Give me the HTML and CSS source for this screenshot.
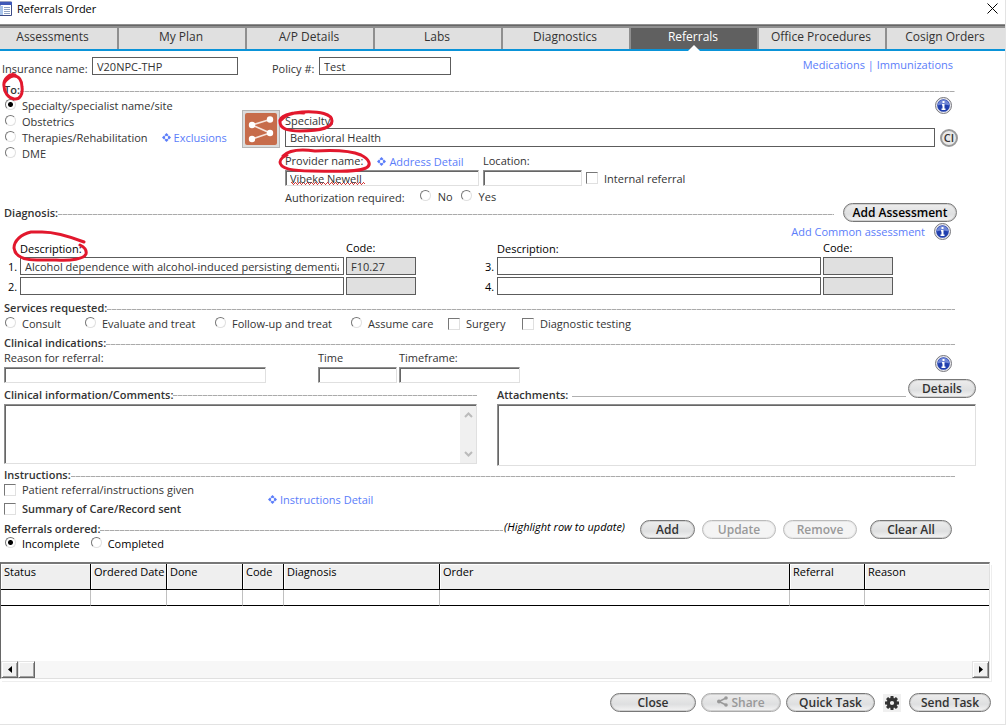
FILE: index.html
```
<!DOCTYPE html>
<html lang="en">
<head>
    <meta charset="UTF-8">
    <meta name="viewport" content="width=device-width, initial-scale=1.0">
    <title>Referrals Order</title>
    <link rel="stylesheet" href="styles.css">
</head>
<body>
    <!-- shared icons -->
    <svg class="sprite" aria-hidden="true">
        <symbol id="icon-info" viewBox="0 0 17 17">
            <circle cx="8.5" cy="8.5" r="8" fill="#e8e8ee" stroke="#77777c"/>
            <circle cx="8.5" cy="8.5" r="6.3" fill="#2140ae"/>
            <path d="M2.6 8.6a5.9 5.9 0 0 1 11.8 0q-6-2.4-11.8 0z" fill="#6f86d6"/>
            <path d="M7.500 4h2v2h-2zM7 7h2.500v4.500h1V13h-4v-1.500h1v-3H7z" fill="#fff"/>
        </symbol>
        <symbol id="icon-diamond" viewBox="0 0 9 9">
            <path d="M4.500 0l2 2-2 2-2-2zM4.500 5l2 2-2 2-2-2zM2 2.500l2 2-2 2-2-2zM7 2.500l2 2-2 2-2-2z" fill="#5b7dfa"/>
            <path d="M4.500 2.800l1.700 1.700-1.700 1.700-1.700-1.700z" fill="#fff"/>
        </symbol>
    </svg>

    <div class="window">
        <header class="titlebar">
            <svg class="app-icon" width="12" height="16" viewBox="0 0 12 16">
                <path d="M0 1h11.500v13.500H0z" fill="#fff" stroke="#3b4a86"/>
                <path d="M0 1h12v3H0z" fill="#3f59b8"/>
                <path d="M0 5h3v9H0z" fill="#a9c4ea"/>
                <path d="M4 6.500h6M4 8.500h6M4 10.500h6M4 12.500h6" stroke="#8fa3c4"/>
            </svg>
            <h1>Referrals Order</h1>
            <button class="close-x" aria-label="Close window">
                <svg width="11" height="11" viewBox="0 0 11 11"><path d="M.5.5l10 10M10.500.5l-10 10" stroke="#000" fill="none"/></svg>
            </button>
        </header>

        <nav class="tabs">
            <a href="#">Assessments</a>
            <a href="#">My Plan</a>
            <a href="#">A/P Details</a>
            <a href="#">Labs</a>
            <a href="#">Diagnostics</a>
            <a href="#" class="active">Referrals</a>
            <a href="#">Office Procedures</a>
            <a href="#">Cosign Orders</a>
        </nav>

        <main>
            <section class="insurance">
                <label for="insurance">Insurance name:</label>
                <input type="text" id="insurance" class="box w-insurance" value="V20NPC-THP">
                <label for="policy" class="policy-label">Policy #:</label>
                <input type="text" id="policy" class="box w-policy" value="Test">
                <div class="quick-links"><a href="#">Medications</a> | <a href="#">Immunizations</a></div>
            </section>

            <h2 class="rule"><span class="marked">To:
                <svg class="mark mark-to" viewBox="0 0 26 30"><path d="M15 3C9 1 3 8 4 14c0 6 4 12 10 13 6 1 9-5 8-12C22 9 19 3 13 4 9 5 6 8 4 11"/></svg>
            </span></h2>

            <section class="to">
                <div class="choices">
                    <label><input type="radio" name="to" checked>Specialty/specialist name/site</label>
                    <label><input type="radio" name="to">Obstetrics</label>
                    <div class="choice-line">
                        <label><input type="radio" name="to">Therapies/Rehabilitation</label>
                        <a href="#" class="detail"><svg><use href="#icon-diamond"/></svg>Exclusions</a>
                    </div>
                    <label><input type="radio" name="to">DME</label>
                </div>

                <button class="network" aria-label="Specialty network">
                    <svg width="32" height="32" viewBox="0 0 32 32">
                        <rect width="32" height="32" rx="2" fill="#c76c4b"/>
                        <path d="M25 6.500L7 12l18 8L7 26" stroke="#f7e6df" stroke-width="1.600" fill="none"/>
                        <g fill="#fff"><circle cx="25" cy="6.500" r="3.200"/><circle cx="7" cy="12" r="3.200"/><circle cx="25" cy="20" r="3.200"/><circle cx="7" cy="26" r="3.200"/></g>
                    </svg>
                </button>

                <div class="fields">
                    <label for="specialty" class="specialty-label"><span class="marked">Specialty:
                        <svg class="mark mark-specialty" viewBox="0 0 60 24"><path d="M28 4C14 3 3 7 4 13c0 6 8 9 20 9 14 0 32-2 32-10C56 5 44 2 26 3 15 4 8 7 5 11"/></svg>
                    </span></label>
                    <input type="text" id="specialty" class="box" value="Behavioral Health">
                    <div class="provider">
                        <div class="provider-head">
                            <label for="provider"><span class="marked">Provider name:
                                <svg class="mark mark-provider" viewBox="0 0 98 26"><path d="M6 9C12 3 24 2 38 4c16-1 34-1 46 4 8 4 11 10 5 13-12 5-36 3-54 3C18 24 3 22 3 15 3 12 7 9 10 8"/></svg>
                            </span></label>
                            <a href="#" class="detail"><svg><use href="#icon-diamond"/></svg>Address Detail</a>
                        </div>
                        <label for="location">Location:</label>
                        <input type="text" id="provider" class="sunken misspelt" value="Vibeke Newell" spellcheck="false">
                        <input type="text" id="location" class="sunken">
                        <label class="internal"><input type="checkbox">Internal referral</label>
                    </div>
                    <div class="authorization">
                        <span>Authorization required:</span>
                        <label><input type="radio" name="auth">No</label>
                        <label><input type="radio" name="auth">Yes</label>
                    </div>
                </div>

                <div class="side">
                    <button class="info" aria-label="Referral help"><svg><use href="#icon-info"/></svg></button>
                    <button class="ci">CI</button>
                </div>
            </section>

            <div class="bar">
                <h2 class="rule">Diagnosis:</h2>
                <button class="pill w-assessment black">Add Assessment</button>
            </div>
            <div class="common">
                <a href="#">Add Common assessment</a>
                <button class="info" aria-label="Diagnosis help"><svg><use href="#icon-info"/></svg></button>
            </div>

            <section class="diagnoses">
                <div class="diagnosis-grid">
                    <span></span>
                    <span class="col-description"><span class="marked">Description:
                        <svg class="mark mark-description" viewBox="0 0 80 34"><path d="M73 13C60 8 44 3 31 3L20 3C10 5 3 12 3 19C4 27 12 31 26 31L45 31C60 32 73 30 75 25C76 21 73 18 69 16"/></svg>
                    </span></span>
                    <span class="col-code">Code:</span>
                    <label for="dx1">1.</label>
                    <input type="text" id="dx1" class="box" value="Alcohol dependence with alcohol-induced persisting dementia">
                    <input type="text" class="box code" aria-label="Code 1" value="F10.27" readonly>
                    <label for="dx2">2.</label>
                    <input type="text" id="dx2" class="box">
                    <input type="text" class="box code" aria-label="Code 2" readonly>
                </div>
                <div class="diagnosis-grid">
                    <span></span>
                    <span class="col-description">Description:</span>
                    <span class="col-code">Code:</span>
                    <label for="dx3">3.</label>
                    <input type="text" id="dx3" class="box">
                    <input type="text" class="box code" aria-label="Code 3" readonly>
                    <label for="dx4">4.</label>
                    <input type="text" id="dx4" class="box">
                    <input type="text" class="box code" aria-label="Code 4" readonly>
                </div>
            </section>

            <h2 class="rule">Services requested:</h2>
            <section class="services">
                <label><input type="radio" name="service">Consult</label>
                <label><input type="radio" name="service">Evaluate and treat</label>
                <label><input type="radio" name="service">Follow-up and treat</label>
                <label><input type="radio" name="service">Assume care</label>
                <label><input type="checkbox">Surgery</label>
                <label><input type="checkbox">Diagnostic testing</label>
            </section>

            <h2 class="rule">Clinical indications:</h2>
            <section class="clinical">
                <div>
                    <div class="indications">
                        <label for="reason">Reason for referral:</label>
                        <label for="time">Time</label>
                        <label for="timeframe">Timeframe:</label>
                        <input type="text" id="reason" class="sunken">
                        <input type="text" id="time" class="sunken">
                        <input type="text" id="timeframe" class="sunken">
                    </div>
                    <h2 class="rule comments-head"><label for="comments">Clinical information/Comments:</label></h2>
                    <div class="comments">
                        <textarea id="comments"></textarea>
                        <div class="scroll-v">
                            <svg width="9" height="6" viewBox="0 0 9 6"><path d="M1 5l3.500-3.500L8 5"/></svg>
                            <svg width="9" height="6" viewBox="0 0 9 6"><path d="M1 1l3.500 3.500L8 1"/></svg>
                        </div>
                    </div>
                </div>
                <div class="attachments">
                    <button class="info" aria-label="Clinical help"><svg><use href="#icon-info"/></svg></button>
                    <div class="attachments-head">
                        <h2 class="rule solid"><label for="attachments">Attachments:</label></h2>
                        <button class="pill w-details">Details</button>
                    </div>
                    <textarea id="attachments"></textarea>
                </div>
            </section>

            <h2 class="rule">Instructions:</h2>
            <section class="instructions">
                <div>
                    <label><input type="checkbox">Patient referral/instructions given</label>
                    <label class="strong"><input type="checkbox">Summary of Care/Record sent</label>
                </div>
                <a href="#" class="detail"><svg><use href="#icon-diamond"/></svg>Instructions Detail</a>
            </section>

            <section class="ordered">
                <div class="ordered-head">
                    <div class="bar">
                        <h2 class="rule">Referrals ordered:</h2>
                        <em>(Highlight row to update)</em>
                    </div>
                    <div class="status">
                        <label><input type="radio" name="status" checked>Incomplete</label>
                        <label><input type="radio" name="status">Completed</label>
                    </div>
                </div>
                <div class="ordered-actions">
                    <button class="pill w-add">Add</button>
                    <button class="pill w-update" disabled>Update</button>
                    <button class="pill w-update" disabled>Remove</button>
                    <button class="pill w-clear">Clear All</button>
                </div>
            </section>

            <div class="grid-frame">
                <table>
                    <thead>
                        <tr>
                            <th class="c-status">Status</th>
                            <th class="c-date">Ordered Date</th>
                            <th class="c-date">Done</th>
                            <th class="c-code">Code</th>
                            <th class="c-diagnosis">Diagnosis</th>
                            <th>Order</th>
                            <th class="c-referral">Referral</th>
                            <th class="c-reason">Reason</th>
                        </tr>
                    </thead>
                    <tbody>
                        <tr><td></td><td></td><td></td><td></td><td></td><td></td><td></td><td></td></tr>
                    </tbody>
                </table>
                <div class="scroll-h">
                    <button aria-label="Scroll left"><svg width="4" height="7" viewBox="0 0 4 7"><path d="M4 0v7L0 3.500z"/></svg></button>
                    <div class="thumb"></div>
                    <button class="right" aria-label="Scroll right"><svg width="4" height="7" viewBox="0 0 4 7"><path d="M0 0v7l4-3.500z"/></svg></button>
                </div>
            </div>

            <footer>
                <button class="pill w-close">Close</button>
                <button class="pill w-share" disabled>
                    <svg width="11" height="11" viewBox="0 0 11 11"><path d="M9 2L2 5.500 9 9" stroke="#999" stroke-width="1.500" fill="none"/><g fill="#999"><circle cx="9" cy="2" r="1.800"/><circle cx="2" cy="5.500" r="2"/><circle cx="9" cy="9" r="1.800"/></g></svg>
                    Share
                </button>
                <button class="pill w-quick">Quick Task</button>
                <button class="gear" aria-label="Settings">
                    <svg width="14" height="14" viewBox="-7 -7 14 14" fill="#333">
                        <circle r="3.600" fill="none" stroke="#333" stroke-width="3"/>
                        <g id="teeth"><path d="M-1.400-7h2.800l.4 3h-3.600zM-1.400 7h2.800l.4-3h-3.600zM-7-1.400v2.800l3 .4v-3.600zM7-1.400v2.800l-3 .4v-3.600z"/></g>
                        <use href="#teeth" transform="rotate(45)"/>
                    </svg>
                </button>
                <button class="pill w-send">Send Task</button>
            </footer>
        </main>
    </div>
</body>
</html>
```
FILE: styles.css
```
* {
    box-sizing: border-box;
}
body {
    margin: 0;
    background-color: #fff;
    color: #333;
    font-family: "Open Sans", "Noto Sans", sans-serif;
    font-size: 11px;
    line-height: 15px;
}
input, textarea, button {
    font: inherit;
    color: inherit;
    margin: 0;
    border-radius: 0;
}
button {
    padding: 0;
    border: none;
    background: none;
    cursor: pointer;
}
a {
    color: #5b7dfa;
    text-decoration: none;
}
label, a, span {
    white-space: nowrap;
}
.sprite {
    display: none;
}
.window {
    min-height: 725px;
    border-right: 1px solid #e3e3e3;
    border-bottom: 1px solid #e3e3e3;
}

/* title bar and tabs */
.titlebar {
    display: flex;
    align-items: center;
    gap: 5px;
    height: 25px;
    padding: 0 7px 7px 0;
    border-bottom: 1px solid #8f8f8f;
}
.titlebar h1 {
    flex: 1;
    margin: 0;
    font-size: 11px;
    font-weight: normal;
    color: #000;
}
.close-x {
    height: 11px;
    line-height: 0;
}
.tabs {
    display: grid;
    grid-template-columns: 119fr repeat(6, 128fr) 118fr;
    padding-top: 2px;
    border-top: 1px solid #666;
    border-bottom: 2px solid #0a93d8;
    background-color: #8f8f8f;
}
.tabs a {
    height: 21px;
    padding-right: 12px;
    border-right: 2px solid #8f8f8f;
    background-color: #e0e0e0;
    color: #333;
    font-size: 12px;
    line-height: 18px;
    text-align: center;
}
.tabs a + a {
    padding-right: 2px;
}
.tabs a:last-child {
    border-right: none;
}
.tabs .active {
    position: relative;
    background-color: #606060;
    color: #fff;
}
.tabs .active::after {
    content: "";
    position: absolute;
    left: 50%;
    bottom: -2px;
    margin-left: -6px;
    border: 6px solid transparent;
    border-top: none;
    border-bottom-color: #fff;
}

/* headings with a line */
.rule {
    display: flex;
    align-items: center;
    flex: 1;
    height: 15px;
    margin: 0 50px 0 4px;
    font-size: 11px;
    font-weight: 600;
}
.rule::after {
    content: "";
    flex: 1;
    height: 1px;
    margin-top: 3px;
    background: repeating-linear-gradient(90deg, #aaa 0 4px, #d4d4d4 4px 5px);
}
.rule.solid::after {
    margin-left: 4px;
    background: #b0b0b0;
}
.bar {
    display: flex;
    align-items: center;
}
.bar .rule {
    margin-right: 9px;
}

/* fields */
.box {
    width: 100%;
    height: 18px;
    padding: 0 4px;
    border: 1px solid #5c5c5c;
    background-color: #fff;
}
.box.code {
    background-color: #e0e0e0;
}
.sunken, textarea {
    width: 100%;
    height: 16px;
    padding: 0 4px;
    border: 1px solid #e0e0e0;
    border-top-color: #8f8f8f;
    border-left-color: #8f8f8f;
    background-color: #fff;
    box-shadow: inset 1px 1px #666;
}
/* zigzag under the name */
.misspelt {
    background-image:
        repeating-linear-gradient(90deg, #d43a3a 0 1px, transparent 1px 4px),
        repeating-linear-gradient(90deg, transparent 0 1px, #d43a3a 1px 2px, transparent 2px 3px, #d43a3a 3px 4px),
        repeating-linear-gradient(90deg, transparent 0 2px, #d43a3a 2px 3px, transparent 3px 4px);
    background-repeat: no-repeat;
    background-size: 74px 1px;
    background-position: 5px 11px, 5px 12px, 5px 13px;
}
input[type="radio"], input[type="checkbox"] {
    appearance: none;
    flex: none;
    width: 12px;
    height: 12px;
    background-color: #fff;
    border: 1px solid #e0e0e0;
    border-top-color: #777;
    border-left-color: #777;
}
input[type="radio"] {
    width: 11px;
    height: 11px;
    margin: 0 1px 2px;
    border-radius: 50%;
}
input[type="radio"]:checked {
    background: radial-gradient(circle, #000 2px, #fff 3px);
}
.choices label, .services label, .instructions label, .status label, .authorization label, .internal {
    display: flex;
    align-items: center;
    gap: 6px;
}
.choices label, .services label, .status label {
    gap: 5px;
}
.detail {
    display: flex;
    align-items: center;
    gap: 3px;
}
.detail svg {
    width: 9px;
    height: 9px;
}
.info {
    width: 17px;
    height: 17px;
    line-height: 0;
}
.info svg {
    width: 17px;
    height: 17px;
}

/* pen circles round the labels */
.marked {
    position: relative;
}
.mark {
    position: absolute;
    z-index: 1;
    fill: none;
    stroke: #e2182d;
    stroke-width: 3;
    stroke-linecap: round;
    pointer-events: none;
}
.mark-to {
    left: -4px;
    top: -10px;
    width: 26px;
    height: 30px;
}
.mark-specialty {
    left: -9px;
    top: -4px;
    width: 60px;
    height: 24px;
}
.mark-provider {
    left: -8px;
    top: -6px;
    width: 98px;
    height: 26px;
}
.mark-description {
    left: -9px;
    top: -12px;
    width: 80px;
    height: 34px;
}

/* insurance */
.insurance {
    display: flex;
    align-items: flex-start;
    height: 31px;
    padding: 6px 52px 0 2px;
}
.insurance label {
    flex: none;
    width: 90px;
    padding-top: 4px;
}
.insurance .policy-label {
    width: 47px;
    margin-left: 34px;
}
.w-insurance {
    width: 146px;
}
.w-policy {
    width: 132px;
}
.quick-links {
    margin-left: auto;
    color: #5b7dfa;
}

/* to */
.to {
    display: grid;
    grid-template-columns: 238px 43px 1fr 66px;
    padding: 0 4px;
}
.choices label, .choice-line {
    height: 16px;
}
.choice-line {
    display: flex;
    gap: 14px;
}
.network {
    width: 38px;
    height: 38px;
    margin-top: 13px;
    border: 1px solid #b5b5b5;
    background-color: #dcdcdc;
    line-height: 0;
}
.fields {
    display: flex;
    flex-direction: column;
}
.specialty-label {
    padding-top: 16px;
}
.fields .box {
    height: 19px;
}
.provider {
    display: grid;
    grid-template-columns: 194px 99px auto;
    grid-template-rows: 23px 16px;
    column-gap: 4px;
    justify-content: start;
}
.provider > label[for="location"] {
    grid-column: 2 / span 2;
    padding-top: 6px;
}
.provider-head {
    display: flex;
    gap: 14px;
    padding-top: 6px;
}
.authorization {
    display: flex;
    gap: 7px;
    height: 17px;
    padding-top: 4px;
}
.authorization span {
    margin-right: 7px;
}
.side {
    display: flex;
    flex-direction: column;
    gap: 15px;
}
.ci {
    width: 18px;
    height: 18px;
    margin-left: 5px;
    border: 2px solid #999;
    border-radius: 50%;
    background-color: #e8e8e8;
    font-weight: 600;
    line-height: 14px;
}

/* buttons */
.pill {
    flex: none;
    height: 19px;
    border: 1px solid #777;
    border-radius: 10px;
    background: linear-gradient(#ededed, #dedfe0 60%, #f4f4f4);
    box-shadow: inset 0 0 0 1px #cfcfcf;
    font-size: 12px;
    font-weight: 600;
    line-height: 16px;
}
.pill.black {
    color: #000;
}
.pill:disabled {
    border-color: #aaa;
    color: #999;
    cursor: default;
}
.ordered-actions .pill:disabled {
    border-color: #bbb;
    background: #f4f4f4;
    box-shadow: inset 0 0 0 1px #e6e6e6;
}
.w-assessment { width: 114px; margin-right: 48px; }
.w-details { width: 68px; }
.w-add { width: 55px; }
.w-update { width: 74px; }
.w-clear { width: 82px; }
.w-close { width: 86px; }
.w-share { width: 80px; }
.w-quick { width: 89px; }
.w-send { width: 82px; }

/* diagnosis */
.common {
    display: flex;
    justify-content: flex-end;
    align-items: center;
    gap: 9px;
    height: 18px;
    padding-right: 54px;
}
.diagnoses {
    display: grid;
    grid-template-columns: 1fr 1fr;
    column-gap: 66px;
    padding: 0 112px 5px 5px;
    color: #000;
}
.diagnosis-grid {
    display: grid;
    grid-template-columns: 15px 1fr 72px;
    grid-template-rows: 15px 18px 18px;
    row-gap: 2px;
}
.diagnosis-grid .box {
    color: #333;
}
.diagnosis-grid .code {
    margin-left: 2px;
    width: 70px;
}
.col-description {
    padding-top: 1px;
}
.col-code {
    margin-left: 2px;
}
.diagnosis-grid label {
    padding: 2px 0 0 3px;
}

.services {
    display: grid;
    grid-template-columns: 80px 130px 136px 97px 74px auto;
    justify-content: start;
    height: 20px;
    padding: 1px 4px 4px;
}
.services input[type="checkbox"] {
    margin: 0 1px;
}

/* clinical */
.clinical {
    display: grid;
    grid-template-columns: minmax(0, 473fr) minmax(0, 479fr);
    column-gap: 20px;
    padding: 0 29px 1px 4px;
}
.indications {
    display: grid;
    grid-template-columns: 312px 79px 121px;
    grid-template-rows: 17px 17px;
    column-gap: 2px;
}
.indications #reason {
    width: 262px;
}
.comments-head {
    height: 20px;
    margin: 0;
}
.comments {
    display: flex;
    position: relative;
}
textarea {
    display: block;
    height: 62px;
    resize: none;
}
.comments textarea {
    height: 60px;
}
.scroll-v {
    position: absolute;
    top: 2px;
    right: 1px;
    bottom: 1px;
    display: flex;
    flex-direction: column;
    justify-content: space-between;
    align-items: center;
    width: 16px;
    padding: 6px 0;
    background-color: #f0f0f0;
}
.scroll-v path {
    fill: none;
    stroke: #bbb;
    stroke-width: 2;
}
.attachments {
    padding-top: 5px;
}
.attachments .info {
    display: block;
    margin: 0 24px 7px auto;
}
.attachments-head {
    display: flex;
    align-items: flex-start;
    height: 25px;
}
.attachments-head .rule {
    margin: 8px 2px 0 0;
}

/* instructions */
.instructions {
    display: flex;
    align-items: center;
    padding: 0 4px 4px;
}
.instructions > div {
    display: flex;
    flex-direction: column;
    gap: 4px;
    width: 264px;
}
.strong {
    font-weight: 600;
}

/* referrals ordered */
.ordered {
    display: flex;
    gap: 15px;
    padding-right: 53px;
}
.ordered-head {
    flex: 1;
    padding-top: 1px;
}
.ordered .rule {
    margin-right: 1px;
}
.ordered em {
    color: #000;
    line-height: 12px;
    padding-bottom: 3px;
}
.status {
    display: flex;
    gap: 10px;
    padding: 0 4px;
    color: #000;
}
.ordered-actions {
    display: flex;
    gap: 7px;
}
.w-clear {
    margin-left: 6px;
}

/* order list */
.grid-frame {
    margin: 11px 15px 0 0;
    border: 1px solid #e0e0e0;
    border-top: 2px solid #777;
    border-left: 1px solid #666;
    box-shadow: 1px 2px #fff, 2px 3px #eee;
}
table {
    width: 100%;
    table-layout: fixed;
    border-collapse: separate;
    border-spacing: 0;
    color: #000;
}
th {
    height: 26px;
    padding: 0 3px;
    border-right: 1px solid #000;
    border-bottom: 1px solid #000;
    background-color: #efefef;
    box-shadow: inset 1px 1px #fff;
    font-weight: normal;
    line-height: 16px;
    text-align: left;
    vertical-align: top;
    white-space: nowrap;
}
td {
    height: 16px;
    padding: 0;
    border-right: 1px solid #c0c0c0;
    border-bottom: 1px solid #000;
}
th:last-child, td:last-child {
    border-right: none;
}
.c-status { width: 90px; }
.c-date { width: 76px; }
.c-code { width: 41px; }
.c-diagnosis { width: 156px; }
.c-referral { width: 75px; }
.c-reason { width: 124px; }
.scroll-h {
    display: flex;
    height: 17px;
    margin-top: 55px;
    background-color: #f7f7f7;
}
.scroll-h button, .thumb {
    width: 17px;
    height: 17px;
    border: 1px solid #e3e3e3;
    border-right-color: #666;
    border-bottom-color: #666;
    background-color: #f0f0f0;
    box-shadow: inset 1px 1px #fff, inset -1px -1px #a0a0a0;
    line-height: 0;
}
.scroll-h .right {
    margin-left: auto;
}

footer {
    display: flex;
    align-items: center;
    justify-content: flex-end;
    padding: 14px 14px 11px;
}
footer .pill {
    margin-left: 5px;
}
.gear {
    width: 18px;
    height: 18px;
    margin: 0 3px 0 8px;
    background-color: #f0f0f0;
    line-height: 0;
}
```
